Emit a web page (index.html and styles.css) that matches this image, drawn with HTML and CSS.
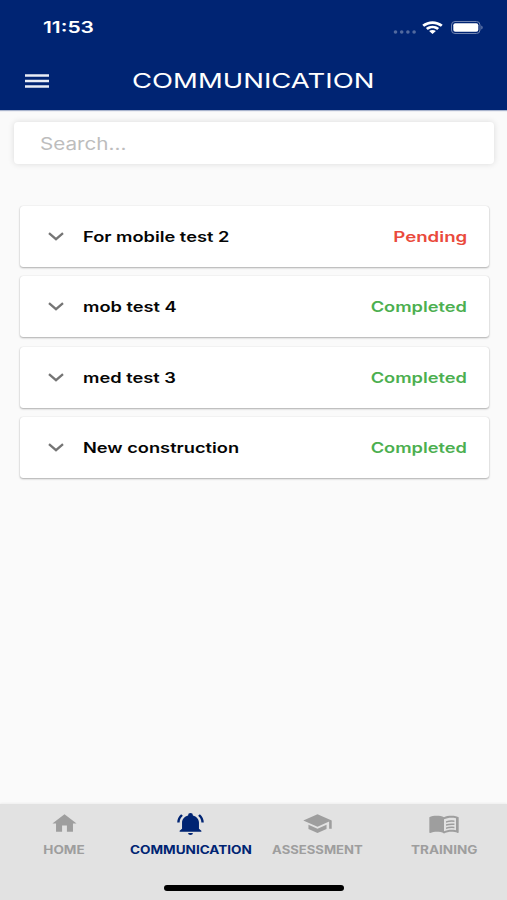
FILE: index.html
```html
<!DOCTYPE html>
<html lang="en">
<head>
<meta charset="utf-8">
<title>Communication</title>
<link rel="stylesheet" href="styles.css">
</head>
<body>
<div class="app">
  <header class="header">
    <div class="status-bar">
      <span class="clock"><span class="wide">11:53</span></span>
      <div class="status-icons">
        <svg class="signal" viewBox="0 0 24 4"><circle cx="2.5" cy="2" r="1.8"/><circle cx="8.7" cy="2" r="1.8"/><circle cx="14.9" cy="2" r="1.8"/><circle cx="21.1" cy="2" r="1.8"/></svg>
        <svg class="wifi" viewBox="0 0 21 13"><path d="M.3 3.8C6-1.1 15-1.1 20.7 3.8L18.9 5.8C14 1.9 7 1.9 2.1 5.8zM3.9 7C7.7 3.9 13.3 3.9 17.1 7L15.2 8.9C12.4 6.8 8.6 6.8 5.8 8.9zM7.1 10.1C9 8.6 12 8.6 13.9 10.1L10.5 13z"/></svg>
        <svg class="battery" viewBox="0 0 33 13"><rect class="battery-shell" x=".5" y=".5" width="28.5" height="12" rx="3.5"/><rect x="2.3" y="2.2" width="25" height="8.6" rx="2"/><path class="battery-tip" d="M30.3 4.5c1.8.6 1.8 3.4 0 4z"/></svg>
      </div>
    </div>
    <div class="title-bar">
      <svg class="menu" viewBox="0 0 24 14"><path d="M0 1.5h24M0 7h24M0 12.5h24"/></svg>
      <h1 class="title"><span class="wide">COMMUNICATION</span></h1>
    </div>
  </header>
  <main class="content">
    <div class="search"><span class="wide">Search...</span></div>
    <ul class="list">
      <li class="card"><svg class="chevron" viewBox="0 0 16 9"><path d="M1 1.2 8 7.2 15 1.2"/></svg><span class="name">For mobile test 2</span><span class="state pending">Pending</span></li>
      <li class="card"><svg class="chevron" viewBox="0 0 16 9"><path d="M1 1.2 8 7.2 15 1.2"/></svg><span class="name">mob test 4</span><span class="state completed">Completed</span></li>
      <li class="card"><svg class="chevron" viewBox="0 0 16 9"><path d="M1 1.2 8 7.2 15 1.2"/></svg><span class="name">med test 3</span><span class="state completed">Completed</span></li>
      <li class="card"><svg class="chevron" viewBox="0 0 16 9"><path d="M1 1.2 8 7.2 15 1.2"/></svg><span class="name">New construction</span><span class="state completed">Completed</span></li>
    </ul>
  </main>
  <footer class="footer">
    <nav class="tabs">
      <a class="tab home"><svg viewBox="0 0 24 24" preserveAspectRatio="none"><path d="M10 20v-6h4v6h5v-8h3L12 3 2 12h3v8z"/></svg><span class="label">HOME</span></a>
      <a class="tab communication active"><svg viewBox="0 0 24 24" preserveAspectRatio="none"><path d="M21 19v1H3v-1l2-2v-6c0-3.1 2.03-5.83 5-6.71V4a2 2 0 0 1 4 0v.29c2.97.88 5 3.61 5 6.71v6zM14 21a2 2 0 0 1-4 0M19.75 3.19l-1.42 1.42C20.04 6.3 21 8.6 21 11h2c0-2.93-1.16-5.75-3.25-7.81M1 11h2c0-2.4.96-4.7 2.67-6.39L4.25 3.19C2.16 5.25 1 8.07 1 11"/></svg><span class="label">COMMUNICATION</span></a>
      <a class="tab assessment"><svg viewBox="0 0 24 24" preserveAspectRatio="none"><path d="M12 3 1 9l11 6 9-4.91V17h2V9M5 13.18v4L12 21l7-3.82v-4L12 17z"/></svg><span class="label">ASSESSMENT</span></a>
      <a class="tab training"><svg viewBox="0 0 24 24" preserveAspectRatio="none"><path d="M21 5c-1.11-.35-2.33-.5-3.5-.5-1.95 0-4.05.4-5.5 1.5-1.45-1.1-3.55-1.5-5.5-1.5S2.45 4.9 1 6v14.65c0 .25.25.5.5.5.1 0 .15-.05.25-.05C3.1 20.45 5.05 20 6.5 20c1.95 0 4.05.4 5.5 1.5 1.35-.85 3.8-1.5 5.5-1.5 1.65 0 3.35.3 4.75 1.05.1.05.15.05.25.05.25 0 .5-.25.5-.5V6c-.6-.45-1.25-.75-2-1m0 13.5c-1.1-.35-2.3-.5-3.5-.5-1.7 0-4.15.65-5.5 1.5V8c1.35-.85 3.8-1.5 5.5-1.5 1.2 0 2.4.15 3.5.5z"/><path d="M13.5 9.8q3-1.2 6.3-.7v1.4q-3.3-.5-6.3.7zm0 3q3-1.2 6.3-.7v1.4q-3.3-.5-6.3.7zm0 3q3-1.2 6.3-.7v1.4q-3.3-.5-6.3.7z"/></svg><span class="label">TRAINING</span></a>
    </nav>
    <div class="home-indicator"></div>
  </footer>
</div>
</body>
</html>
```
FILE: styles.css
```css
* { box-sizing: border-box; }
body { margin: 0; font-family: Inter, "Liberation Sans", sans-serif; background: #fafafa; }
.app { display: flex; flex-direction: column; width: 507px; height: 900px; overflow: hidden; }
.wide { display: inline-block; transform-origin: left center; white-space: nowrap; }

.header { height: 110px; flex: none; background: #002473; color: #fff; box-shadow: 0 1px 1px #a9b4cd; }
.status-bar { height: 54px; display: flex; align-items: center; justify-content: space-between; padding: 0 23px 0 43px; }
.clock { font-size: 16px; font-weight: 600; }
.clock .wide { transform: scaleX(1.31); }
.status-icons { display: flex; align-items: center; fill: #fff; }
.signal { width: 24px; height: 4px; margin: 9px 5px 0 0; fill: #526a9f; }
.wifi { width: 21px; height: 13px; margin-right: 8px; }
.battery { width: 33px; height: 13px; }
.battery-shell { fill: none; stroke: #7184b0; }
.battery-tip { fill: #7184b0; }
.title-bar { height: 54px; display: flex; align-items: center; padding-left: 25px; }
.menu { width: 24px; height: 14px; stroke: #e9edf6; stroke-width: 2.6; margin-right: 83px; }
.title { margin: 0; font-size: 20.6px; font-weight: 400; line-height: 28px; }
.title .wide { transform: scaleX(1.335); }

.content { flex: 1; padding: 12px 13px 0 14px; }
.search { height: 42px; border-radius: 4px; background: #fff; box-shadow: 0 0 6px rgba(0,0,0,.13); padding-left: 26px; line-height: 45px; font-size: 17px; color: #bdbdbd; }
.search .wide { transform: scaleX(1.215); }
.list { list-style: none; margin: 42px 5.5px 0 5.5px; padding: 0; display: grid; gap: 9.4px; }
.card { height: 61px; display: flex; align-items: center; padding: 0 21.5px 0 28px; background: #fff; border-radius: 3px; box-shadow: 0 1px 2px rgba(0,0,0,.3), 0 0 1px rgba(0,0,0,.16); font-size: 14.2px; font-weight: 600; }
.chevron { width: 16px; height: 9px; margin-right: 19.5px; fill: none; stroke: #757575; stroke-width: 2.3; }
.name { flex: 1; color: #050505; transform-origin: left center; transform: scaleX(1.285); white-space: nowrap; }
.state { transform-origin: right center; transform: scaleX(1.285); }
.pending { color: #ea4a3c; transform: scaleX(1.315); }
.completed { color: #4caf50; }

.footer { height: 96px; flex: none; background: #e2e2e2; box-shadow: 0 -1px 2px rgba(0,0,0,.05); display: flex; flex-direction: column; align-items: center; }
.tabs { width: 100%; height: 81px; display: grid; grid-template-columns: repeat(4, 1fr); padding: 7px 0 0 1px; }
.tab { display: flex; flex-direction: column; align-items: center; color: #9e9e9e; fill: currentColor; }
.tab svg { width: 29px; height: 25px; }
.tab.assessment svg { width: 31px; }
.tab.training svg { width: 32px; }
.tab.active { color: #002473; }
.label { margin-top: 7px; font-size: 11.1px; line-height: 14px; font-weight: 700; transform: scaleX(1.22); white-space: nowrap; }
.assessment .label { transform: scaleX(1.18); }
.home-indicator { width: 180px; height: 5.5px; border-radius: 3px; background: #000; margin-left: 1px; }
```
